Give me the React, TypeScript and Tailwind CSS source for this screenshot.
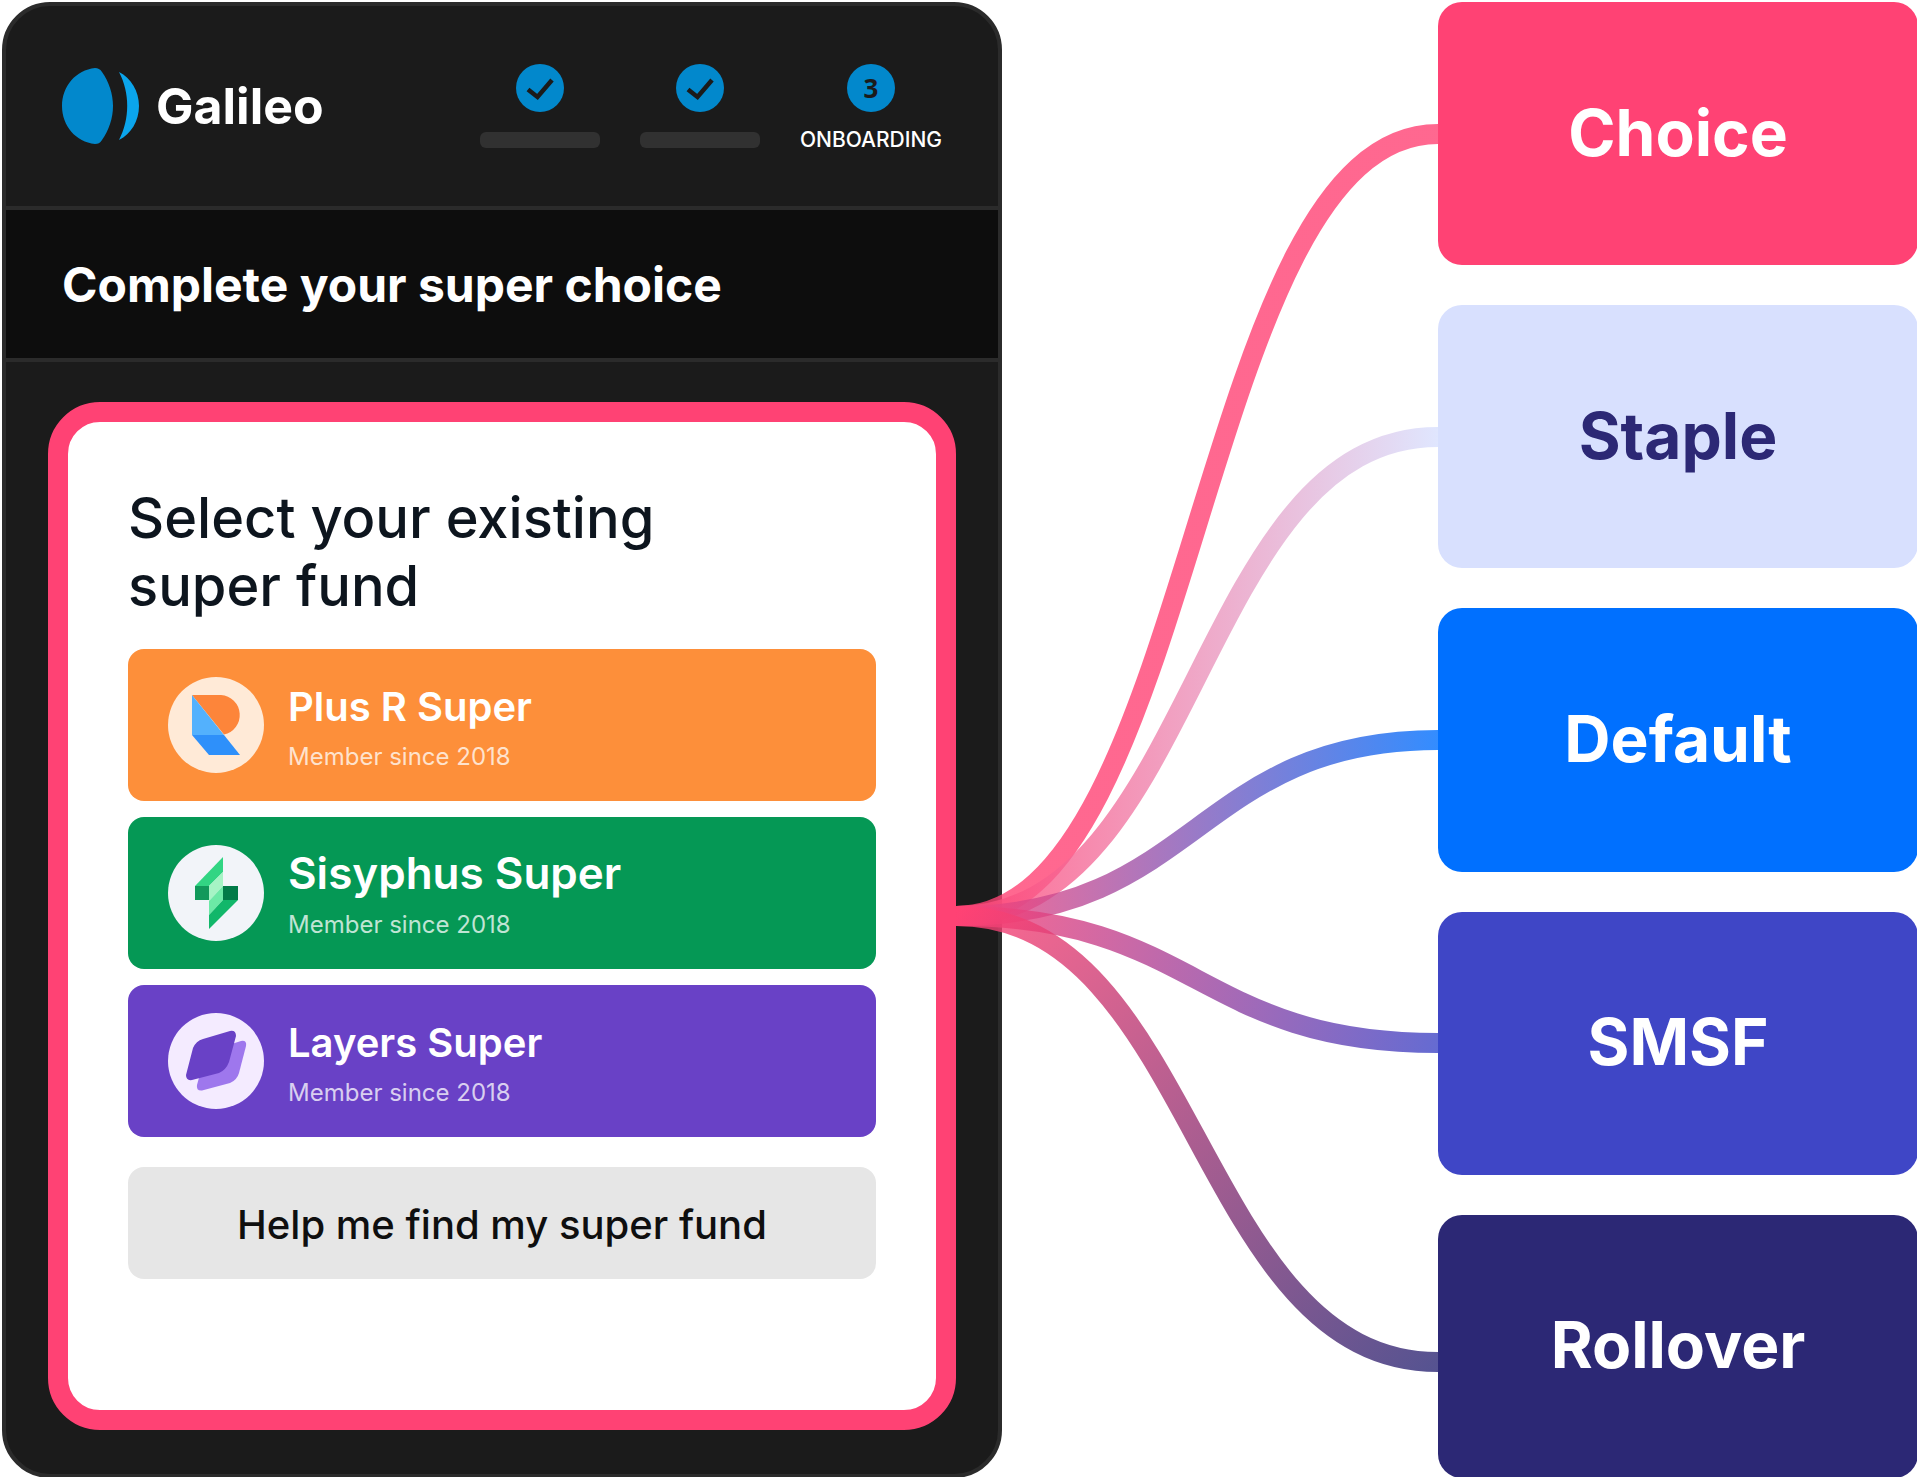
import React from "react";

const DESTINATIONS = [
  { label: "Choice", style: "bg-[#ff4274] text-white" },
  { label: "Staple", style: "bg-[#d8e0fe] text-[#2c2875]" },
  { label: "Default", style: "bg-[#0070ff] text-white" },
  { label: "SMSF", style: "bg-[#3f46c6] text-white" },
  { label: "Rollover", style: "bg-[#2c2875] text-white" },
];

function GalileoLogo() {
  return (
    <svg viewBox="0 0 77 76" className="h-[76px] w-[77px]" aria-hidden="true">
      <path
        d="M33 0C36 0 38 1 40 4C47 14 51 26 51 38C51 50 47 62 40 72C38 75 36 76 33 76C14 74 0 58 0 38C0 18 14 2 33 0Z"
        fill="#0288cc"
      />
      <path d="M57 4C69 10 77 23 77 38C77 53 69 66 57 72C68 51 68 25 57 4Z" fill="#0ba5ec" />
    </svg>
  );
}

function PlusRLogo() {
  return (
    <svg viewBox="0 0 96 96" className="size-24 shrink-0" aria-hidden="true">
      <circle cx="48" cy="48" r="48" fill="#ffead7" />
      <path d="M24 18H53A20 20 0 0 1 56 57.500L24 18Z" fill="#fd853a" />
      <path d="M24 18L56 58H24Z" fill="#53b1fd" />
      <path d="M24 58H56L72 78H41Z" fill="#2e90fa" />
    </svg>
  );
}

function SisyphusLogo() {
  return (
    <svg viewBox="0 0 96 96" className="size-24 shrink-0" aria-hidden="true">
      <circle cx="48" cy="48" r="48" fill="#f2f4f9" />
      <path d="M55 12V27L41 41H27Z" fill="#32d583" />
      <path d="M27 41H41V55H27Z" fill="#12995b" />
      <path d="M55 41H70V55H55Z" fill="#027a48" />
      <path d="M55 27V41L41 56V41Z" fill="#a6f4c5" />
      <path d="M55 41V55L41 70V56Z" fill="#6ce9a6" />
      <path d="M55 55H70L41 84V70Z" fill="#12b76a" />
    </svg>
  );
}

function LayersLogo() {
  return (
    <svg viewBox="0 0 96 96" className="size-24 shrink-0" aria-hidden="true">
      <circle cx="48" cy="48" r="48" fill="#f4ebff" />
      <path
        d="M45 37L73 28Q79 27 78 33L71 60Q69 67 62 70L34 77.500Q28 78 29 72L36 46Q38 40 45 37Z"
        fill="#9e77ed"
      />
      <path
        d="M35 26L62 18Q68 17 68 23L61 49Q58 57 51 60L24 67Q18 68 18 62L25 35Q28 28 35 26Z"
        fill="#6941c6"
      />
    </svg>
  );
}

const FUNDS = [
  { name: "Plus R Super", style: "bg-[#fd8f3a]", text: "mb-1 text-[40px] leading-[60px]", Logo: PlusRLogo },
  { name: "Sisyphus Super", style: "bg-[#059855]", text: "mb-2 text-[44px] leading-[56px]", Logo: SisyphusLogo },
  { name: "Layers Super", style: "bg-[#6941c6]", text: "mb-1 text-[40px] leading-[60px]", Logo: LayersLogo },
];

function DoneStep() {
  return (
    <li className="flex flex-col items-center gap-5" aria-label="Completed step">
      <svg viewBox="0 0 48 48" className="size-12" aria-hidden="true">
        <circle cx="24" cy="24" r="24" fill="#0288cc" />
        <path d="M12 25.500L21.500 33L36 16" fill="none" stroke="#1b1b1b" strokeWidth="4.500" />
      </svg>
      <span className="h-4 w-[120px] rounded-[6px] bg-[#313131]" />
    </li>
  );
}

const LINKS = [
  { id: "choice", y: 132, to: "#ff4274", y2: 132 },
  { id: "staple", y: 435, to: "#d8e0fe", y2: 914 },
  { id: "default", y: 738, to: "#0070ff", y2: 914 },
  { id: "smsf", y: 1041, to: "#3f46c6", y2: 1041 },
  { id: "rollover", y: 1360, to: "#2c2875", y2: 1360 },
];

function Connectors() {
  return (
    <svg
      viewBox="0 0 482 1476"
      preserveAspectRatio="none"
      className="pointer-events-none absolute inset-y-0 right-0 -left-[46px] h-full w-[calc(100%+46px)]"
      aria-hidden="true"
    >
      <defs>
        {LINKS.map((l) => (
          <linearGradient key={l.id} id={l.id} gradientUnits="userSpaceOnUse" x1="0" y1="914" x2="482" y2={l.y2}>
            <stop stopColor="#ff4274" />
            <stop offset="1" stopColor={l.to} />
          </linearGradient>
        ))}
      </defs>
      {LINKS.map((l) => (
        <path
          key={l.id}
          d={`M0 914C241 914 241 ${l.y} 482 ${l.y}`}
          fill="none"
          stroke={`url(#${l.id})`}
          strokeWidth="20"
          opacity="0.8"
        />
      ))}
    </svg>
  );
}

export default function App() {
  return (
    <main className="flex min-h-screen overflow-hidden bg-white font-['Inter',sans-serif]">
      <div className="mt-0.5 -mr-px -mb-px ml-0.5 grid flex-1 grid-cols-[1000fr_436fr_480fr]">
        <section className="flex flex-col rounded-[48px] border-4 border-[#2b2b2b] bg-[#1b1b1b]">
          <header className="flex h-[204px] items-center justify-between border-b-4 border-[#2b2b2b] px-14">
            <div className="flex items-center gap-[17px]">
              <GalileoLogo />
              <span className="text-[50px] font-bold text-white">Galileo</span>
            </div>
            <ol className="flex gap-10">
              <DoneStep />
              <DoneStep />
              <li className="flex flex-col items-center gap-5">
                <span className="flex size-12 items-center justify-center rounded-full bg-[#0288cc] font-['Noto_Sans',sans-serif] text-[26px] font-bold text-[#1b1b1b]">
                  3
                </span>
                <span className="text-[21px] leading-4 font-medium text-white">ONBOARDING</span>
              </li>
            </ol>
          </header>
          <div className="flex h-[152px] items-center border-b-4 border-[#2b2b2b] bg-[#0d0d0d] px-14 pt-0.5">
            <h1 className="text-5xl font-bold text-white">Complete your super choice</h1>
          </div>
          <div className="mx-[42px] mt-10 mb-11 flex flex-1 flex-col rounded-[52px] border-20 border-[#ff4274] bg-white px-[60px] pt-[62px]">
            <h2 className="max-w-[600px] text-[56px] leading-[68px] font-medium text-[#0d151e]">
              Select your existing super fund
            </h2>
            <div className="mt-[29px] flex flex-col gap-4">
              {FUNDS.map(({ name, style, text, Logo }) => (
                <button
                  key={name}
                  type="button"
                  className={`flex h-[152px] items-center gap-6 rounded-2xl px-10 text-left text-white ${style}`}
                >
                  <Logo />
                  <span className="flex flex-col">
                    <span className={`font-semibold ${text}`}>{name}</span>
                    <span className="text-2xl leading-8 text-white/75">Member since 2018</span>
                  </span>
                </button>
              ))}
            </div>
            <button
              type="button"
              className="mt-[30px] h-28 rounded-2xl bg-[#e6e6e6] pt-1 text-[40px] font-medium text-[#0f0f0f]"
            >
              Help me find my super fund
            </button>
          </div>
        </section>
        <div className="relative">
          <Connectors />
        </div>
        <nav className="flex flex-col gap-10" aria-label="Super fund options">
          {DESTINATIONS.map(({ label, style }) => (
            <button
              key={label}
              type="button"
              className={`flex-1 rounded-3xl pb-0.5 text-[64px] font-bold ${style}`}
            >
              {label}
            </button>
          ))}
        </nav>
      </div>
    </main>
  );
}
